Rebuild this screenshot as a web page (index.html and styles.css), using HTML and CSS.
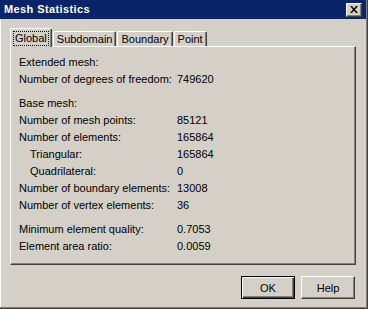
FILE: index.html
```html
<!DOCTYPE html>
<html>
<head>
<meta charset="utf-8">
<link rel="stylesheet" href="styles.css">
</head>
<body>
<div class="window">
  <div class="titlebar">
    <span class="title">Mesh Statistics</span>
    <span class="close">
      <svg width="8" height="7" viewBox="0 0 8 7"><path d="M0 0h2l2 2.5L6 0h2L5 3.5 8 7H6L4 4.5 2 7H0l3-3.5z" fill="#000"/></svg>
    </span>
  </div>
  <div class="content">
    <div class="tabs">
      <div class="tab active"><span class="focus">Global</span></div>
      <div class="tab">Subdomain</div>
      <div class="tab">Boundary</div>
      <div class="tab">Point</div>
    </div>
    <div class="panel">
      <div class="group">
        <div class="row"><span class="label">Extended mesh:</span></div>
        <div class="row"><span class="label">Number of degrees of freedom:</span><span class="value">749620</span></div>
      </div>
      <div class="group">
        <div class="row"><span class="label">Base mesh:</span></div>
        <div class="row"><span class="label">Number of mesh points:</span><span class="value">85121</span></div>
        <div class="row"><span class="label">Number of elements:</span><span class="value">165864</span></div>
        <div class="row"><span class="label indent">Triangular:</span><span class="value">165864</span></div>
        <div class="row"><span class="label indent">Quadrilateral:</span><span class="value">0</span></div>
        <div class="row"><span class="label">Number of boundary elements:</span><span class="value">13008</span></div>
        <div class="row"><span class="label">Number of vertex elements:</span><span class="value">36</span></div>
      </div>
      <div class="group">
        <div class="row"><span class="label">Minimum element quality:</span><span class="value">0.7053</span></div>
        <div class="row"><span class="label">Element area ratio:</span><span class="value">0.0059</span></div>
      </div>
    </div>
    <div class="buttons">
      <div class="btn default"><span>OK</span></div>
      <div class="btn"><span>Help</span></div>
    </div>
  </div>
</div>
</body>
</html>
```

FILE: styles.css
```css
html, body {
  margin: 0;
  padding: 0;
  background: #d4d0c8;
}
body {
  font-family: "Liberation Sans", Arial, sans-serif;
  font-size: 11px;
  color: #000;
}
.window {
  width: 368px;
  height: 309px;
  box-sizing: border-box;
  background: #d4d0c8;
  border-right: 1px solid #404040;
  border-bottom: 1px solid #404040;
  box-shadow: inset -1px -1px 0 #808080, inset 1px 0 0 #ffffff;
  display: flex;
  flex-direction: column;
}
.titlebar {
  height: 19px;
  background: #0a246a;
  display: flex;
  align-items: center;
  justify-content: space-between;
  padding: 0 4px 0 4px;
  margin-right: 1px;
}
.title {
  color: #fff;
  font-weight: bold;
  font-size: 11px;
  letter-spacing: 0.4px;
  line-height: 19px;
}
.close {
  width: 16px;
  height: 14px;
  box-sizing: border-box;
  background: #d4d0c8;
  border-top: 1px solid #fff;
  border-left: 1px solid #fff;
  border-right: 1px solid #404040;
  border-bottom: 1px solid #404040;
  box-shadow: inset -1px -1px 0 #808080;
  display: flex;
  align-items: center;
  justify-content: center;
  padding-bottom: 1px;
}
.content {
  flex: 1;
  display: flex;
  flex-direction: column;
  padding: 9px 10px 0 10px;
}
.tabs {
  display: flex;
  align-items: flex-end;
  height: 18px;
  padding-left: 2px;
  position: relative;
  z-index: 1;
}
.tab {
  height: 15px;
  box-sizing: border-box;
  padding: 0 3px;
  margin-right: 1px;
  border-top: 1px solid #fff;
  border-left: 1px solid #fff;
  border-right: 1px solid #404040;
  box-shadow: inset -1px 0 0 #808080;
  border-radius: 2px 2px 0 0;
  line-height: 14px;
  background: #d4d0c8;
}
.tab.active {
  height: 19px;
  margin-bottom: -1px;
  padding: 2px 3px 0 3px;
  margin-left: -2px;
  margin-right: -1px;
}
.focus {
  display: inline-block;
  outline: 1px dotted #000;
  padding: 0 1px;
  line-height: 13px;
}
.tab.active + .tab {
  margin-left: 2px;
}
.panel {
  height: 219px;
  box-sizing: border-box;
  border-top: 1px solid #fff;
  border-left: 1px solid #fff;
  border-right: 1px solid #404040;
  border-bottom: 1px solid #404040;
  box-shadow: inset -1px -1px 0 #808080;
  padding: 7px 0 0 8px;
  margin-right: 1px;
  display: flex;
  flex-direction: column;
  gap: 7px;
}
.row {
  height: 17px;
  line-height: 17px;
  display: flex;
}
.label {
  width: 158px;
  flex: none;
}
.label.indent {
  padding-left: 11px;
  width: 147px;
}
.buttons {
  display: flex;
  justify-content: flex-end;
  gap: 6px;
  padding-top: 11px;
  padding-right: 2px;
}
.btn {
  width: 54px;
  height: 23px;
  box-sizing: border-box;
  border-top: 1px solid #fff;
  border-left: 1px solid #fff;
  border-right: 1px solid #404040;
  border-bottom: 1px solid #404040;
  box-shadow: inset -1px -1px 0 #808080;
  display: flex;
  align-items: center;
  justify-content: center;
}
.btn.default {
  border: 1px solid #000;
  box-shadow: inset 1px 1px 0 #fff, inset -1px -1px 0 #404040, inset -2px -2px 0 #808080;
}
```
